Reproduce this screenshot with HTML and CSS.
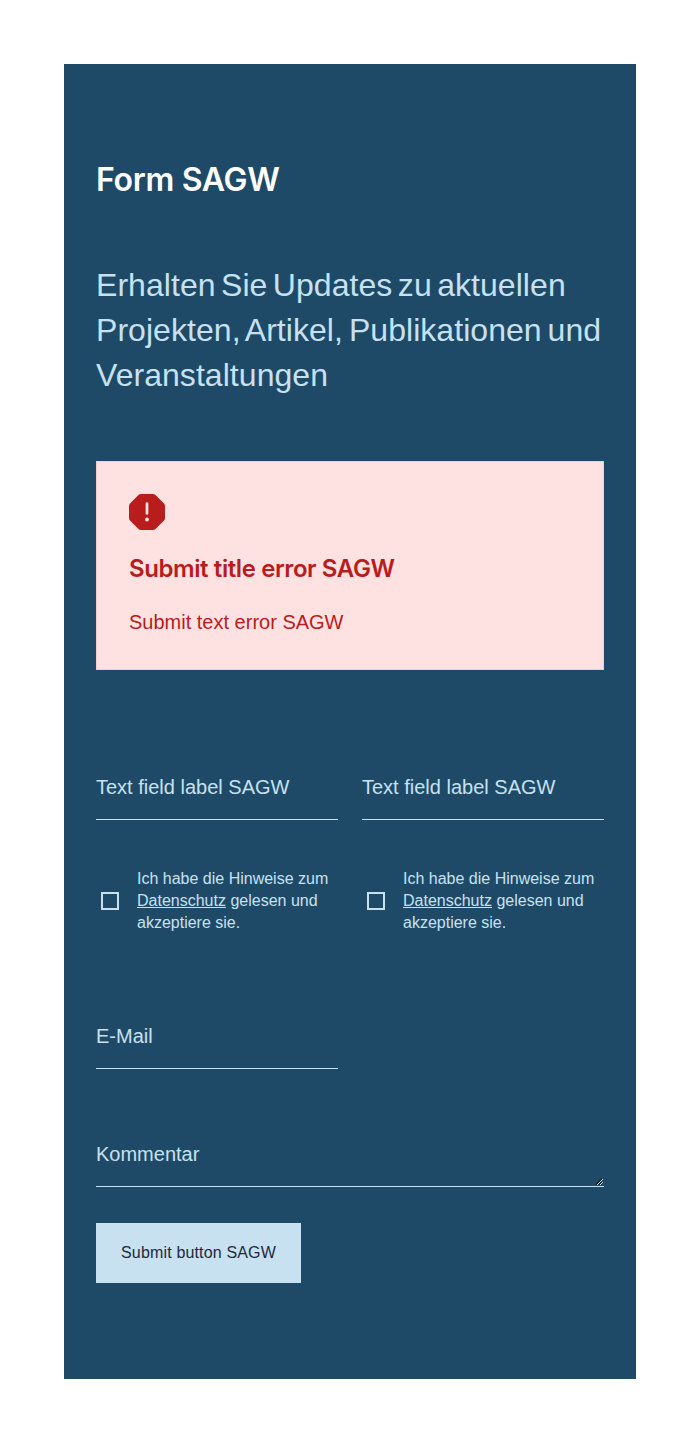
FILE: index.html
```html
<!DOCTYPE html>
<html lang="de">
<head>
<meta charset="utf-8">
<title>Form SAGW</title>
<link rel="stylesheet" href="styles.css">
</head>
<body>
<form class="form" novalidate>
  <h2 class="title">Form SAGW</h2>
  <p class="lead">Erhalten Sie Updates zu aktuellen<br><span class="lead-wide">Projekten, Artikel, Publikationen und</span><br>Veranstaltungen</p>
  <div class="alert">
    <svg class="alert-icon" width="36" height="36" viewBox="0 0 36 36"><path d="M12 0H24Q25.500 0 26.500 1L35 9.500Q36 10.500 36 12V24Q36 25.500 35 26.500L26.500 35Q25.500 36 24 36H12Q10.500 36 9.500 35L1 26.500Q0 25.500 0 24V12Q0 10.500 1 9.500L9.500 1Q10.500 0 12 0Z" fill="#b91c1c"/><path d="M18 9.500V19.500" stroke="#fee2e2" stroke-width="2.700" stroke-linecap="round"/><circle cx="18" cy="25.500" r="2" fill="#fee2e2"/></svg>
    <h3 class="alert-title">Submit title error SAGW</h3>
    <p class="alert-text">Submit text error SAGW</p>
  </div>
  <div class="grid">
    <label class="field">Text field label SAGW</label>
    <label class="field">Text field label SAGW</label>
    <div class="check"><span class="box"></span><span>Ich habe die Hinweise zum <a class="link">Datenschutz</a> gelesen und akzeptiere sie.</span></div>
    <div class="check"><span class="box"></span><span>Ich habe die Hinweise zum <a class="link">Datenschutz</a> gelesen und akzeptiere sie.</span></div>
    <label class="field email">E-Mail</label>
    <label class="field comment">Kommentar<svg class="grip" width="7" height="7" viewBox="0 0 7 7" shape-rendering="crispEdges"><path d="M0 6L6 0M3 6L6 3" transform="translate(0 .5)" stroke="#10283a"/><path d="M1 7L7 1M4 7L7 4" stroke="#d5dce0"/></svg></label>
  </div>
  <button class="submit" type="button">Submit button SAGW</button>
</form>
</body>
</html>
```
FILE: styles.css
```css
* { box-sizing: border-box; margin: 0; }
body { padding: 64px; background: #fff; font-family: "Liberation Sans", Arial, sans-serif; }
.form { height: 1315px; padding: 96px 32px; background: #1e4a68; color: #c7e1f0; }
.title { font: 600 32px/40px Inter, sans-serif; color: #fff; letter-spacing: -0.3px; white-space: nowrap; }
.lead { margin-top: 63px; font: 400 32px/45px "Liberation Sans", Arial, sans-serif; letter-spacing: 0.05px; word-spacing: -3.5px; white-space: nowrap; }
.lead-wide { word-spacing: -3px; }
.alert { margin-top: 63px; height: 209px; padding: 32px; border: 1px solid #fecaca; background: #fee2e2; color: #b91c1c; }
.alert-icon { display: block; }
.alert-title { margin-top: 23px; font: 600 24px/32px Inter, sans-serif; letter-spacing: -0.41px; white-space: nowrap; }
.alert-text { margin-top: 21px; font-size: 20px; line-height: 32px; }
.grid { display: grid; grid-template-columns: 1fr 1fr; column-gap: 24px; margin-top: 84px; }
.field { position: relative; height: 66px; padding-top: 17px; border-bottom: 1px solid #c7e1f0; font-size: 20px; line-height: 32px; }
.check { display: flex; align-items: center; height: 66px; margin-top: 48px; padding-left: 5px; gap: 18px; font-size: 16px; line-height: 22px; }
.box { flex: none; width: 18px; height: 18px; border: 2px solid #c7e1f0; }
.link { text-decoration: underline; }
.email { grid-column: 1; margin-top: 69px; }
.comment { grid-column: 1 / -1; margin-top: 52px; }
.grip { position: absolute; right: 1px; bottom: 1px; }
.submit { display: block; width: 205px; height: 60px; margin-top: 36px; padding: 0; border: 0; background: #c7e1f0; color: #1e293b; font: 16px/24px "Liberation Sans", Arial, sans-serif; letter-spacing: 0.16px; }
```
